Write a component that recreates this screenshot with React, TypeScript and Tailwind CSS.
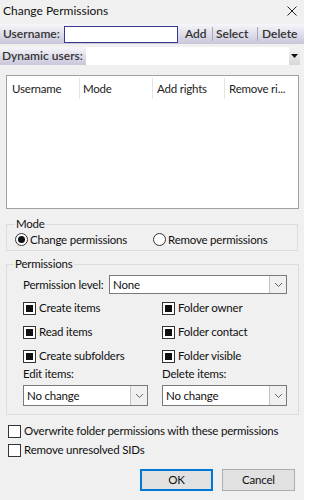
// Change Permissions dialog (Windows classic look)
const font = "font-['Lato','Noto_Sans',sans-serif]";

function Check({ filled }: { filled?: boolean }) {
  return (
    <span className="flex h-[13px] w-[13px] shrink-0 items-center justify-center border border-[#333] bg-white">
      {filled ? <span className="h-[7px] w-[7px] bg-[#111]" /> : null}
    </span>
  );
}

function Radio({ on }: { on?: boolean }) {
  return (
    <span className="flex h-[13px] w-[13px] shrink-0 items-center justify-center rounded-full border border-[#333] bg-white">
      {on ? <span className="h-[7px] w-[7px] rounded-full bg-[#111]" /> : null}
    </span>
  );
}

function Chevron() {
  return (
    <svg width="9" height="6" viewBox="0 0 9 6">
      <path d="M1 1 L4.5 4.5 L8 1" fill="none" stroke="#666" strokeWidth="1" />
    </svg>
  );
}

function Combo({ value, className }: { value: string; className: string }) {
  return (
    <div className={`flex border border-[#7a7a7a] bg-white ${className}`}>
      <span className="flex-1 self-center whitespace-nowrap pl-[3px] text-[11.5px] leading-none tracking-[-0.2px] text-[#111]">{value}</span>
      <span className="flex w-[17px] items-center justify-center border-l border-[#c4c4c4] bg-[#f0f0f0]">
        <Chevron />
      </span>
    </div>
  );
}

function CheckRow({ label, filled }: { label: string; filled?: boolean }) {
  return (
    <div className="flex h-[14px] items-center gap-[3px] whitespace-nowrap text-[11.5px] tracking-[-0.2px] text-[#111]">
      <Check filled={filled} />
      <span>{label}</span>
    </div>
  );
}

export default function App() {
  return (
    <div className={`${font} h-[500px] w-[304px] overflow-hidden whitespace-nowrap bg-[#f0f0f0] text-[#111]`}>
      {/* title bar */}
      <div className="flex h-[22px] items-center justify-between pl-[3px] pr-[7px]">
        <span className="text-[12px]">Change Permissions</span>
        <svg width="10" height="10" viewBox="0 0 10 10">
          <path d="M0.5 0.5 L9.5 9.5 M9.5 0.5 L0.5 9.5" stroke="#222" strokeWidth="1" />
        </svg>
      </div>

      {/* toolbar */}
      <div className="mt-[2px] flex h-[20px] items-center bg-gradient-to-b from-[#f6f6fa] to-[#c8c6da] text-[12px] font-semibold text-[#333]">
        <span className="w-[64px] pl-[3px]">Username:</span>
        <span className="h-[17px] w-[114px] border border-[#3a3a8c] bg-white" />
        <span className="ml-[7px] w-[22px]">Add</span>
        <span className="ml-[5px] h-[14px] w-px bg-[#a8a6bc]" />
        <span className="ml-[3px] w-[37px]">Select</span>
        <span className="ml-[4px] h-[14px] w-px bg-[#a8a6bc]" />
        <span className="ml-[4px]">Delete</span>
      </div>
      <div className="mt-[3px] flex h-[18px] pr-[4px]">
        <span className="flex w-[86px] items-center bg-gradient-to-b from-[#f6f6fa] to-[#c8c6da] pl-[2px] text-[12px] font-semibold text-[#333]">
          Dynamic users:
        </span>
        <span className="flex flex-1 justify-end bg-white">
          <span className="flex w-[11px] items-center justify-center bg-gradient-to-b from-[#f4f4f4] to-[#d8d8d8]">
            <svg width="7" height="4" viewBox="0 0 7 4">
              <path d="M0 0 L7 0 L3.5 4 Z" fill="#111" />
            </svg>
          </span>
        </span>
      </div>

      {/* list */}
      <div className="ml-[6px] mt-[10px] h-[134px] w-[293px] border border-[#a0a0a0] bg-white">
        <div className="flex h-[23px] items-stretch pt-[2px] text-[11.5px] tracking-[-0.2px] text-[#222]">
          <span className="w-[72px] self-center pl-[5px]">Username</span>
          <span className="w-px bg-[#e5e5e5]" />
          <span className="w-[72px] self-center pl-[3px]">Mode</span>
          <span className="w-px bg-[#e5e5e5]" />
          <span className="w-[71px] self-center pl-[4px]">Add rights</span>
          <span className="w-px bg-[#e5e5e5]" />
          <span className="flex-1 self-center pl-[4px]">Remove ri...</span>
        </div>
      </div>

      {/* mode */}
      <fieldset className="ml-[6px] mt-[8px] h-[34px] w-[292px] border border-[#dcdcdc] px-[8px] text-[11.5px] tracking-[-0.2px]">
        <legend className="px-[1px] leading-[14px]">Mode</legend>
        <div className="flex items-center">
          <div className="flex w-[138px] items-center gap-[2px]">
            <Radio on />
            <span>Change permissions</span>
          </div>
          <div className="flex items-center gap-[2px]">
            <Radio />
            <span>Remove permissions</span>
          </div>
        </div>
      </fieldset>

      {/* permissions */}
      <fieldset className="ml-[6px] mt-[6px] h-[158px] w-[292px] border border-[#dcdcdc] pl-[16px] pr-[11px] text-[11.5px] tracking-[-0.2px]">
        <legend className="-ml-[9px] px-[1px] leading-[14px]">Permissions</legend>
        <div className="mt-[4px] flex h-[19px] items-center">
          <span className="w-[86px]">Permission level:</span>
          <Combo value="None" className="h-[19px] flex-1" />
        </div>
        <div className="mt-[7px] grid grid-cols-[139px_1fr] gap-y-[10px]">
          <CheckRow label="Create items" filled />
          <CheckRow label="Folder owner" filled />
          <CheckRow label="Read items" filled />
          <CheckRow label="Folder contact" filled />
          <CheckRow label="Create subfolders" filled />
          <CheckRow label="Folder visible" filled />
        </div>
        <div className="mt-[2px] grid grid-cols-[139px_1fr]">
          <span>Edit items:</span>
          <span>Delete items:</span>
        </div>
        <div className="mt-[3px] grid grid-cols-[139px_1fr]">
          <Combo value="No change" className="h-[21px] w-[125px]" />
          <Combo value="No change" className="h-[21px] w-[125px]" />
        </div>
      </fieldset>

      {/* options */}
      <div className="ml-[8px] mt-[9px] flex flex-col gap-[5px]">
        <CheckRow label="Overwrite folder permissions with these permissions" />
        <CheckRow label="Remove unresolved SIDs" />
      </div>

      {/* buttons */}
      <div className="mt-[12px] flex justify-end gap-[9px] pr-[9px] text-[11.5px] tracking-[-0.2px]">
        <button className="h-[22px] w-[73px] border-2 border-[#0078d7] bg-[#e1e1e1]">OK</button>
        <button className="h-[22px] w-[73px] border border-[#adadad] bg-[#e1e1e1]">Cancel</button>
      </div>
    </div>
  );
}
